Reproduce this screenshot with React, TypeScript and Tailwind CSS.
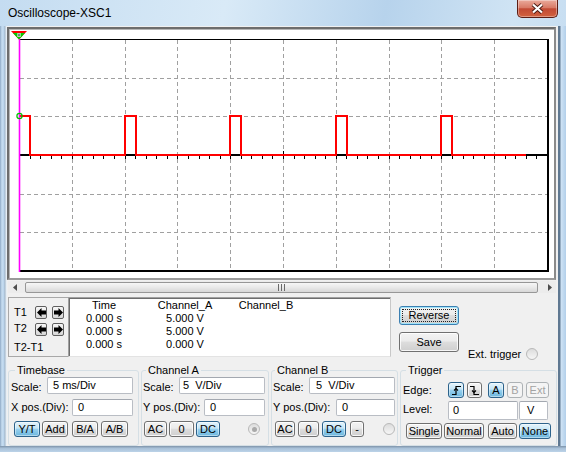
import React from 'react';

const BTN =
  'flex items-center justify-center rounded-[3px] border border-[#707070] bg-[linear-gradient(#f3f3f3,#ebebeb_45%,#dddddd_50%,#cfcfcf)] shadow-[inset_0_0_0_1px_rgba(255,255,255,0.8)] text-[11px] leading-none text-black';
const BTN_ON =
  'flex items-center justify-center rounded-[3px] border border-[#2c628b] bg-[linear-gradient(#e5f4fc,#c4e5f6_45%,#98d1ef_50%,#6cb6dd)] shadow-[inset_0_0_0_1px_rgba(255,255,255,0.45)] text-[11px] leading-none text-black';
const BTN_OFF =
  'flex items-center justify-center rounded-[3px] border border-[#adb2b5] bg-[#f4f4f4] text-[11px] leading-none text-[#a3a3a3]';

interface BtnProps {
  className: string;
  state?: 'on' | 'off';
  children: React.ReactNode;
}

const Btn: React.FC<BtnProps> = ({ className, state, children }) => (
  <div className={`${state === 'on' ? BTN_ON : state === 'off' ? BTN_OFF : BTN} ${className}`}>{children}</div>
);

const Field: React.FC<{ className: string; children: React.ReactNode }> = ({ className, children }) => (
  <div
    className={`flex h-full items-center whitespace-pre rounded-[2px] border border-[#b9bdc4] border-t-[#a3a8b0] bg-white text-[11px] ${className}`}
  >
    {children}
  </div>
);

const Radio: React.FC<{ className: string; dot?: boolean }> = ({ className, dot }) => (
  <div
    className={`flex items-center justify-center rounded-full border border-[#b8b8b8] bg-[linear-gradient(#dcdcdc,#f6f6f6)] ${className}`}
  >
    {dot && <div className="h-[5px] w-[5px] rounded-full bg-[#a9a9a9]" />}
  </div>
);

const ArrowBtn: React.FC<{ dir: 'left' | 'right' }> = ({ dir }) => (
  <div className="flex h-[13px] w-[12px] items-center justify-center rounded-[2px] border border-[#5f5f5f] bg-[linear-gradient(#f7f7f7,#d6d6d6)]">
    <svg width="9" height="9" viewBox="0 0 9 9">
      <path
        d={dir === 'left' ? 'M0 4.5 L4.5 0 L4.5 2.5 L9 2.5 L9 6.5 L4.5 6.5 L4.5 9 Z' : 'M9 4.5 L4.5 0 L4.5 2.5 L0 2.5 L0 6.5 L4.5 6.5 L4.5 9 Z'}
        fill="#000"
      />
    </svg>
  </div>
);

const Plot: React.FC = () => {
  const xs = Array.from({ length: 9 }, (_, i) => Math.round(9 + (i + 1) * 52.8));
  const ys = [48, 86, 125, 164, 202];
  const ticks = Array.from({ length: 51 }, (_, i) => Math.round(9 + i * 10.56));
  const rises = [9, 115, 220, 326, 431];
  let d = 'M9 86';
  rises.forEach((r, i) => {
    if (i > 0) d += ` H${r} V86`;
    d += ` H${r + 11} V125`;
  });
  d += ' H516';

  return (
    <svg width="544" height="248" viewBox="0 0 544 248" className="block">
      <g shapeRendering="crispEdges" stroke="#a0a0a0" strokeWidth="1" strokeDasharray="4 3">
        {xs.map((x) => (
          <line key={`v${x}`} x1={x + 0.5} y1={10} x2={x + 0.5} y2={241} />
        ))}
        {ys.map((y) => (
          <line key={`h${y}`} x1={10} y1={y + 0.5} x2={537} y2={y + 0.5} />
        ))}
      </g>
      <g shapeRendering="crispEdges" stroke="#000">
        <line x1={9} y1={9.5} x2={538} y2={9.5} strokeWidth="1" />
        <line x1={9} y1={241} x2={538} y2={241} strokeWidth="2" />
        <line x1={537.5} y1={9} x2={537.5} y2={242} strokeWidth="2" />
        <line x1={9} y1={125} x2={537} y2={125} strokeWidth="2" />
        {ticks.map((t, i) => (
          <line key={`t${i}`} x1={t + 0.5} y1={i === 25 ? 121 : 125} x2={t + 0.5} y2={129} strokeWidth="1" />
        ))}
      </g>
      <path d={d} fill="none" stroke="#ff0000" strokeWidth="2" shapeRendering="crispEdges" />
      <line x1={9.5} y1={9} x2={9.5} y2={242} stroke="#ff00ff" strokeWidth="1.6" />
      {/* T1 cursor marker */}
      <polygon points="1,1 17,1 9,9.5" fill="#ff0000" />
      <polygon points="3,3 15,3 9,9.5" fill="#00d000" />
      <rect x="7.5" y="3" width="3" height="4" fill="#fff" />
      <rect x="8.5" y="3.5" width="1" height="3" fill="#000" />
      <circle cx="9.5" cy="86" r="2.6" fill="none" stroke="#00c000" strokeWidth="1.2" />
    </svg>
  );
};

const RiseIcon = () => (
  <svg width="11" height="11" viewBox="0 0 11 11">
    <path d="M1 9.5 H5 V1.5 H10" fill="none" stroke="#000" strokeWidth="1.2" />
    <path d="M3 5.5 L5 3.5 L7 5.5" fill="none" stroke="#000" strokeWidth="1.1" />
  </svg>
);

const FallIcon = () => (
  <svg width="11" height="11" viewBox="0 0 11 11">
    <path d="M1 1.5 H5 V9.5 H10" fill="none" stroke="#000" strokeWidth="1.2" />
    <path d="M3 5.5 L5 7.5 L7 5.5" fill="none" stroke="#000" strokeWidth="1.1" />
  </svg>
);

export default function App() {
  return (
    <div className="flex h-[452px] w-[566px] flex-col overflow-hidden bg-[linear-gradient(100deg,#c4dcf1,#d9eaf7_35%,#b7d3ec_60%,#d0e4f4_80%,#bcd6ee)] font-['Liberation_Sans',Arial,sans-serif] text-black">
      {/* title bar */}
      <div className="flex h-[26px] shrink-0 items-start">
        <div className="ml-[8px] mt-[5px] text-[12px] leading-[16px]">Oscilloscope-XSC1</div>
        <div className="ml-auto mr-[8px] flex h-[18px] w-[41px] items-center justify-center rounded-b-[5px] border border-t-0 border-[#5c1d14] bg-[linear-gradient(#eaaa9b,#d97b67_45%,#c24a34_52%,#d2623f)] shadow-[inset_0_0_0_1px_rgba(255,255,255,0.35)]">
          <svg width="13" height="11" viewBox="0 0 13 11">
            <path d="M2 1.5 L11 9.5 M11 1.5 L2 9.5" stroke="#4a1a12" strokeWidth="4" />
            <path d="M2 1.5 L11 9.5 M11 1.5 L2 9.5" stroke="#fff" strokeWidth="2.2" />
          </svg>
        </div>
      </div>

      <div className="flex h-[420px] shrink-0">
        <div className="w-[7px] shrink-0 bg-[linear-gradient(90deg,#8ea9c5,#c8def1_2px,#b9d3eb_4px,#9fb2c4_5px,#e6eef5_6px)]" />
        <div className="flex w-[551px] shrink-0 flex-col bg-[#f0f0f0]">
          {/* plot */}
          <div className="mt-[1px] h-[253px] w-[549px] border-2 border-[#6d6d6d] border-b-[#9a9a9a] border-r-[#8a8a8a]">
            <div className="h-full w-full overflow-hidden border-l border-t border-[#b5b5b5] bg-white">
              <Plot />
            </div>
          </div>

          {/* scrollbar */}
          <div className="ml-[1px] mt-[1px] flex h-[12px] w-[548px] items-center bg-[#ececec]">
            <div className="flex h-full w-[17px] items-center pl-[5px]">
              <svg width="4" height="7" viewBox="0 0 4 7">
                <path d="M4 0 L0 3.5 L4 7 Z" fill="#4d4d4d" />
              </svg>
            </div>
            <div className="flex h-[11px] w-[513px] items-center justify-center rounded-[2px] border border-[#979797] bg-[linear-gradient(#f7f7f7,#e9e9e9_50%,#d7d7d7)]">
              <svg width="7" height="7" viewBox="0 0 7 7" shapeRendering="crispEdges">
                <path d="M0.5 0 V7 M3.5 0 V7 M6.5 0 V7" stroke="#6a6a6a" strokeWidth="1" />
              </svg>
            </div>
            <div className="flex h-full flex-1 items-center pl-[10px]">
              <svg width="4" height="7" viewBox="0 0 4 7">
                <path d="M0 0 L4 3.5 L0 7 Z" fill="#4d4d4d" />
              </svg>
            </div>
          </div>

          {/* cursor readout */}
          <div className="mt-[4px] flex h-[60px] items-start text-[11px]">
            <div className="ml-[1px] flex h-[60px] w-[60px] flex-col border border-r-0 border-[#a8a8a8]">
              <div className="mt-[8px] flex h-[13px] items-center">
                <span className="w-[26px] pl-[5px]">T1</span>
                <ArrowBtn dir="left" />
                <div className="ml-[5px]">
                  <ArrowBtn dir="right" />
                </div>
              </div>
              <div className="mt-[4px] flex h-[13px] items-center">
                <span className="mb-[3px] w-[26px] pl-[5px]">T2</span>
                <ArrowBtn dir="left" />
                <div className="ml-[5px]">
                  <ArrowBtn dir="right" />
                </div>
              </div>
              <div className="mt-[5px] h-[13px] pl-[5px] leading-[13px]">T2-T1</div>
            </div>
            <div className="h-[60px] w-[323px] border border-[#a0a0a0] border-b-[#e3e3e3] border-r-[#c8c8c8] bg-white pl-[1px] pt-[1px] shadow-[inset_1px_1px_0_#6d6d6d]">
              <div className="flex h-[13px] leading-[13px]">
                <span className="w-[68px] text-center">Time</span>
                <span className="w-[94px] text-center">Channel_A</span>
                <span className="w-[68px] text-center">Channel_B</span>
              </div>
              {['5.000 V', '5.000 V', '0.000 V'].map((v, i) => (
                <div key={i} className="flex h-[13px] leading-[13px]">
                  <span className="w-[68px] text-center">0.000 s</span>
                  <span className="w-[94px] text-center">{v}</span>
                  <span className="w-[68px] text-center" />
                </div>
              ))}
            </div>
            <div className="ml-[8px] flex w-[60px] flex-col">
              <div className="relative mt-[9px] flex h-[19px] items-center justify-center rounded-[3px] border border-[#3c7fb1] bg-[linear-gradient(#f2f2f2,#ebebeb_45%,#dddddd_50%,#cfcfcf)] text-[11px] shadow-[inset_0_0_0_1px_#9fe4fa]">
                <div className="absolute inset-[2px] border border-dotted border-[#222]" />
                Reverse
              </div>
              <Btn className="mt-[7px] h-[20px] w-[60px]">Save</Btn>
            </div>
            <div className="ml-[9px] mt-[50px] flex h-[14px] items-center">
              <span className="whitespace-nowrap">Ext. trigger</span>
              <Radio className="ml-[5px] h-[12px] w-[12px]" />
            </div>
          </div>

          {/* control groups */}
          <div className="mt-[6px] flex items-start text-[11px]">
            <fieldset className="ml-[1px] h-[83px] w-[131px] rounded-[3px] border border-[#d5dfe5]">
              <legend className="ml-[6px] px-[2px] leading-[14px]">Timebase</legend>
              <div className="flex h-[17px] items-start">
                <span className="mt-[3px] w-[38px] pl-[2px] leading-[14px]">Scale:</span>
                <Field className="w-[86px] pl-[5px]">5 ms/Div</Field>
              </div>
              <div className="mt-[5px] flex h-[17px] items-center">
                <span className="w-[63px] whitespace-nowrap pl-[2px]">X pos.(Div):</span>
                <Field className="w-[61px] pl-[5px]">0</Field>
              </div>
              <div className="mt-[5px] flex h-[16px]">
                <Btn className="ml-[5px] w-[26px]" state="on">Y/T</Btn>
                <Btn className="ml-[2px] w-[26px]">Add</Btn>
                <Btn className="ml-[4px] w-[26px]">B/A</Btn>
                <Btn className="ml-[3px] w-[27px]">A/B</Btn>
              </div>
            </fieldset>

            <fieldset className="ml-[2px] h-[83px] w-[128px] rounded-[3px] border border-[#d5dfe5]">
              <legend className="ml-[4px] px-[2px] leading-[14px]">Channel A</legend>
              <div className="flex h-[17px] items-start">
                <span className="mt-[3px] w-[37px] pl-[1px] leading-[14px]">Scale:</span>
                <Field className="w-[86px] pl-[3px]">5  V/Div</Field>
              </div>
              <div className="mt-[5px] flex h-[17px] items-center">
                <span className="w-[62px] whitespace-nowrap pl-[1px]">Y pos.(Div):</span>
                <Field className="w-[61px] pl-[5px]">0</Field>
              </div>
              <div className="mt-[5px] flex h-[16px] items-center">
                <Btn className="ml-[2px] h-full w-[23px]">AC</Btn>
                <Btn className="ml-[2px] h-full w-[25px]">0</Btn>
                <Btn className="ml-[2px] h-full w-[24px]" state="on">DC</Btn>
                <Radio className="ml-[28px] h-[12px] w-[12px]" dot />
              </div>
            </fieldset>

            <fieldset className="ml-[2px] h-[83px] w-[127px] rounded-[3px] border border-[#d5dfe5]">
              <legend className="ml-[3px] px-[2px] leading-[14px]">Channel B</legend>
              <div className="flex h-[17px] items-start">
                <span className="mt-[3px] w-[37px] pl-[1px] leading-[14px]">Scale:</span>
                <Field className="w-[86px] pl-[6px]">5  V/Div</Field>
              </div>
              <div className="mt-[5px] flex h-[17px] items-center">
                <span className="w-[64px] whitespace-nowrap pl-[1px]">Y pos.(Div):</span>
                <Field className="w-[59px] pl-[5px]">0</Field>
              </div>
              <div className="mt-[5px] flex h-[16px] items-center">
                <Btn className="ml-[3px] h-full w-[20px]">AC</Btn>
                <Btn className="ml-[3px] h-full w-[21px]">0</Btn>
                <Btn className="ml-[3px] h-full w-[24px]" state="on">DC</Btn>
                <Btn className="ml-[4px] h-full w-[14px]">-</Btn>
                <Radio className="ml-[19px] h-[12px] w-[12px]" />
              </div>
            </fieldset>

            <fieldset className="ml-[2px] h-[83px] w-[157px] rounded-[3px] border border-[#d5dfe5]">
              <legend className="ml-[5px] px-[2px] leading-[14px]">Trigger</legend>
              <div className="mt-[5px] flex h-[16px] items-center">
                <span className="w-[47px] pl-[2px]">Edge:</span>
                <Btn className="h-full w-[16px]" state="on">
                  <RiseIcon />
                </Btn>
                <Btn className="ml-[3px] h-full w-[15px]">
                  <FallIcon />
                </Btn>
                <Btn className="ml-[6px] h-full w-[16px]" state="on">A</Btn>
                <Btn className="ml-[3px] h-full w-[16px]" state="off">B</Btn>
                <Btn className="ml-[3px] h-full w-[23px]" state="off">Ext</Btn>
              </div>
              <div className="mt-[3px] flex h-[19px] items-center">
                <span className="mb-[3px] w-[47px] pl-[2px]">Level:</span>
                <Field className="w-[70px] pl-[4px]">0</Field>
                <Field className="ml-[1px] w-[29px] pl-[7px]">V</Field>
              </div>
              <div className="mt-[3px] flex h-[16px]">
                <Btn className="ml-[5px] w-[36px]">Single</Btn>
                <Btn className="ml-[2px] w-[40px]">Normal</Btn>
                <Btn className="ml-[4px] w-[29px]">Auto</Btn>
                <Btn className="ml-[2px] w-[32px]" state="on">None</Btn>
              </div>
            </fieldset>
          </div>
        </div>
        <div className="w-[8px] shrink-0 bg-[linear-gradient(90deg,#5f7891,#5f7891_2px,#cfe3f5_3px,#b2cfea)]" />
      </div>
      <div className="h-[6px] shrink-0 bg-[linear-gradient(#7d93aa,#a9c1d8_40%,#bcd3e8)]" />
    </div>
  );
}
